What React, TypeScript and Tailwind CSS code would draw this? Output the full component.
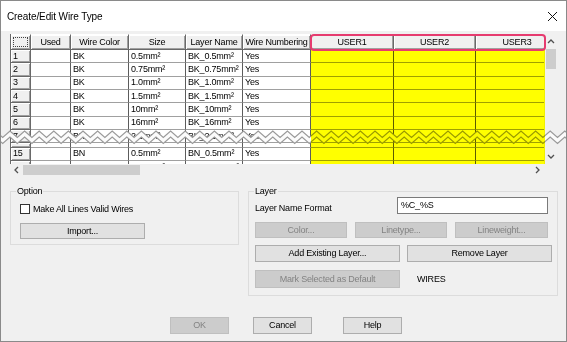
import React from "react";

const colW = [
  "w-[20px]",
  "w-[40px]",
  "w-[58px]",
  "w-[57px]",
  "w-[57px]",
  "w-[68px]",
  "w-[83px]",
  "w-[82px]",
  "w-[83px]",
];

const headers = ["", "Used", "Wire Color", "Size", "Layer Name", "Wire Numbering", "USER1", "USER2", "USER3"];

type RowData = { n: string; c: string; s: string; l: string; y: string; h: string };

const rows: RowData[] = [
  { n: "1", c: "BK", s: "0.5mm²", l: "BK_0.5mm²", y: "Yes", h: "h-[13.33px]" },
  { n: "2", c: "BK", s: "0.75mm²", l: "BK_0.75mm²", y: "Yes", h: "h-[13.33px]" },
  { n: "3", c: "BK", s: "1.0mm²", l: "BK_1.0mm²", y: "Yes", h: "h-[13.33px]" },
  { n: "4", c: "BK", s: "1.5mm²", l: "BK_1.5mm²", y: "Yes", h: "h-[13.33px]" },
  { n: "5", c: "BK", s: "10mm²", l: "BK_10mm²", y: "Yes", h: "h-[13.33px]" },
  { n: "6", c: "BK", s: "16mm²", l: "BK_16mm²", y: "Yes", h: "h-[13.33px]" },
  { n: "7", c: "BK", s: "2.5mm²", l: "BK_2.5mm²", y: "Yes", h: "h-[13.33px]" },
  { n: "", c: "", s: "", l: "", y: "", h: "h-[4.4px]" },
  { n: "15", c: "BN", s: "0.5mm²", l: "BN_0.5mm²", y: "Yes", h: "h-[13.33px]" },
  { n: "16", c: "BN", s: "0.75mm²", l: "BN_0.75mm²", y: "Yes", h: "h-[13.33px]" },
];

const hdr3d =
  "bg-[#f0f0f0] border-r border-b border-[#696969] shadow-[inset_1px_1px_0_#ffffff,inset_-1px_-1px_0_#a0a0a0]";

function Chevron({ dir }: { dir: "up" | "down" | "left" | "right" }) {
  const pts =
    dir === "up"
      ? "1,5 4,2 7,5"
      : dir === "down"
      ? "1,2 4,5 7,2"
      : dir === "left"
      ? "5,1 2,4 5,7"
      : "2,1 5,4 2,7";
  return (
    <svg width="8" height="8" viewBox="0 0 8 8">
      <polyline points={pts} fill="none" stroke="#505050" strokeWidth="1.3" />
    </svg>
  );
}

function Zigzag() {
  const P = 14.6;
  const top: [number, number][] = [];
  for (let k = -2; k < 45; k++) {
    const x = 10 + k * P;
    top.push([x, 2]);
    top.push([x + P / 2, 8.5]);
  }
  const bottom = top.map(([x, y]) => [x, y + 6] as [number, number]);
  const poly = [...top, ...bottom.slice().reverse()].map((p) => p.join(",")).join(" ");
  const t = top.map((p) => p.join(",")).join(" ");
  const b = bottom.map((p) => p.join(",")).join(" ");
  return (
    <svg
      className="absolute left-[-10px] top-[95px]"
      width="567"
      height="17"
      viewBox="0 0 567 17"
    >
      <polygon points={poly} fill="#fbfbfb" />
      <polyline points={t} fill="none" stroke="#9a9a9a" strokeWidth="1.2" />
      <polyline points={b} fill="none" stroke="#9a9a9a" strokeWidth="1.2" />
    </svg>
  );
}

function Btn({
  children,
  disabled,
  cls,
}: {
  children: React.ReactNode;
  disabled?: boolean;
  cls: string;
}) {
  return (
    <div
      className={
        "shrink-0 flex items-center justify-center border text-[9px] leading-none whitespace-nowrap " +
        (disabled
          ? "bg-[#cccccc] border-[#bfbfbf] text-[#838383] "
          : "bg-[#e1e1e1] border-[#adadad] text-black ") +
        cls
      }
    >
      {children}
    </div>
  );
}

export default function App() {
  return (
    <div className="relative w-[567px] h-[342px] overflow-hidden bg-[#f0f0f0] border border-[#8a8a8a] font-['Liberation_Sans',Arial,sans-serif] text-black tracking-[-0.2px]">
      {/* Title bar */}
      <div className="h-[30px] bg-white flex items-center justify-between pl-[6px] pr-[8px]">
        <span className="text-[10px] tracking-[-0.1px]">Create/Edit Wire Type</span>
        <svg width="11" height="11" viewBox="0 0 11 11">
          <path d="M1 1 L10 10 M10 1 L1 10" stroke="#111" strokeWidth="1" />
        </svg>
      </div>

      {/* Table */}
      <div className="relative ml-[9px] mt-[3px] w-[547px] h-[142px] flex flex-col">
        <div className="flex h-[130px]">
          <div className="w-[534px] h-[130px] overflow-hidden border-l border-[#696969] bg-white">
            <div className="w-[548px]">
              <div className="flex h-[16px]">
                {headers.map((h, i) => (
                  <div
                    key={i}
                    className={
                      colW[i] +
                      " shrink-0 h-[16px] flex items-center justify-center text-[9px] leading-none whitespace-nowrap overflow-hidden border-t border-t-white " +
                      hdr3d
                    }
                  >
                    {i === 0 ? (
                      <div className="self-stretch flex-1 m-[2px] border border-dotted border-[#444]" />
                    ) : (
                      h
                    )}
                  </div>
                ))}
              </div>
              {rows.map((r, idx) => (
                <div key={idx} className={"flex overflow-hidden " + r.h}>
                  <div
                    className={
                      colW[0] +
                      " shrink-0 h-full flex items-center pl-[2px] text-[9px] leading-none overflow-hidden " +
                      hdr3d
                    }
                  >
                    {r.n}
                  </div>
                  {["", r.c, r.s, r.l, r.y, "", "", ""].map((v, j) => (
                    <div
                      key={j}
                      className={
                        colW[j + 1] +
                        " shrink-0 h-full flex items-center pl-[2px] text-[9px] leading-none whitespace-nowrap overflow-hidden bg-white border-r border-b border-r-[#5c5c5c] border-b-[#a0a0a0]"
                      }
                    >
                      {v}
                    </div>
                  ))}
                </div>
              ))}
            </div>
          </div>
          {/* vertical scrollbar */}
          <div className="w-[13px] h-[130px] bg-[#f0f0f0] flex flex-col items-center">
            <div className="h-[15px] w-full flex items-center justify-center">
              <Chevron dir="up" />
            </div>
            <div className="w-[10px] h-[20px] bg-[#cdcdcd]" />
            <div className="flex-1" />
            <div className="h-[14px] w-full flex items-center justify-center">
              <Chevron dir="down" />
            </div>
          </div>
        </div>
        {/* horizontal scrollbar */}
        <div className="flex h-[12px]">
          <div className="w-[534px] h-[12px] bg-[#f0f0f0] flex items-center">
            <div className="w-[13px] h-full flex items-center justify-center">
              <Chevron dir="left" />
            </div>
            <div className="w-[117px] h-[10px] bg-[#cdcdcd]" />
            <div className="flex-1" />
            <div className="w-[13px] h-full flex items-center justify-center">
              <Chevron dir="right" />
            </div>
          </div>
          <div className="w-[13px] h-[12px] bg-[#f0f0f0]" />
        </div>

        <Zigzag />
        <div className="absolute left-[301px] top-[16px] w-[234px] h-[114px] bg-[#ffff00] mix-blend-multiply" />
        <div className="absolute left-[300px] top-[0px] w-[236px] h-[17px] border-2 border-[#e63b6f] rounded-[4px]" />
      </div>

      {/* Groups */}
      <div className="flex items-start pl-[9px] mt-[9px] gap-[9px]">
        <fieldset className="min-w-0 w-[229px] border border-[#dcdcdc] pl-[9px] pr-[9px] pb-[5px]">
          <legend className="ml-[-4px] px-[1px] text-[9px] leading-[12px]">Option</legend>
          <div className="flex items-center mt-[7px] h-[10px]">
            <div className="w-[10px] h-[10px] border border-[#333] bg-white" />
            <span className="ml-[3px] text-[9px] leading-none">Make All Lines Valid Wires</span>
          </div>
          <Btn cls="mt-[9px] w-[125px] h-[16px]">Import...</Btn>
        </fieldset>

        <fieldset className="min-w-0 w-[310px] border border-[#dcdcdc] pl-[6px] pr-[9px] pb-[7px]">
          <legend className="ml-[-1px] px-[1px] text-[9px] leading-[12px]">Layer</legend>
          <div className="flex items-center justify-between h-[17px]">
            <span className="text-[9px] leading-none mt-[6px]">Layer Name Format</span>
            <div className="w-[151px] h-[17px] border border-[#7a7a7a] bg-white flex items-center pl-[3px] text-[9px] leading-none">
              %C_%S
            </div>
          </div>
          <div className="flex mt-[8px] gap-[8px]">
            <Btn disabled cls="w-[92px] h-[16px]">Color...</Btn>
            <Btn disabled cls="w-[92px] h-[16px]">Linetype...</Btn>
            <Btn disabled cls="w-[93px] h-[16px]">Lineweight...</Btn>
          </div>
          <div className="flex mt-[7px] gap-[7px]">
            <Btn cls="w-[145px] h-[17px]">Add Existing Layer...</Btn>
            <Btn cls="w-[145px] h-[17px]">Remove Layer</Btn>
          </div>
          <div className="flex items-center mt-[8px]">
            <Btn disabled cls="w-[145px] h-[18px]">Mark Selected as Default</Btn>
            <span className="ml-[17px] text-[9px] leading-none">WIRES</span>
          </div>
        </fieldset>
      </div>

      {/* Bottom buttons */}
      <div className="flex pl-[169px] mt-[21px]">
        <Btn disabled cls="w-[59px] h-[17px]">OK</Btn>
        <Btn cls="ml-[24px] w-[59px] h-[17px]">Cancel</Btn>
        <Btn cls="ml-[31px] w-[59px] h-[17px]">Help</Btn>
      </div>
    </div>
  );
}
